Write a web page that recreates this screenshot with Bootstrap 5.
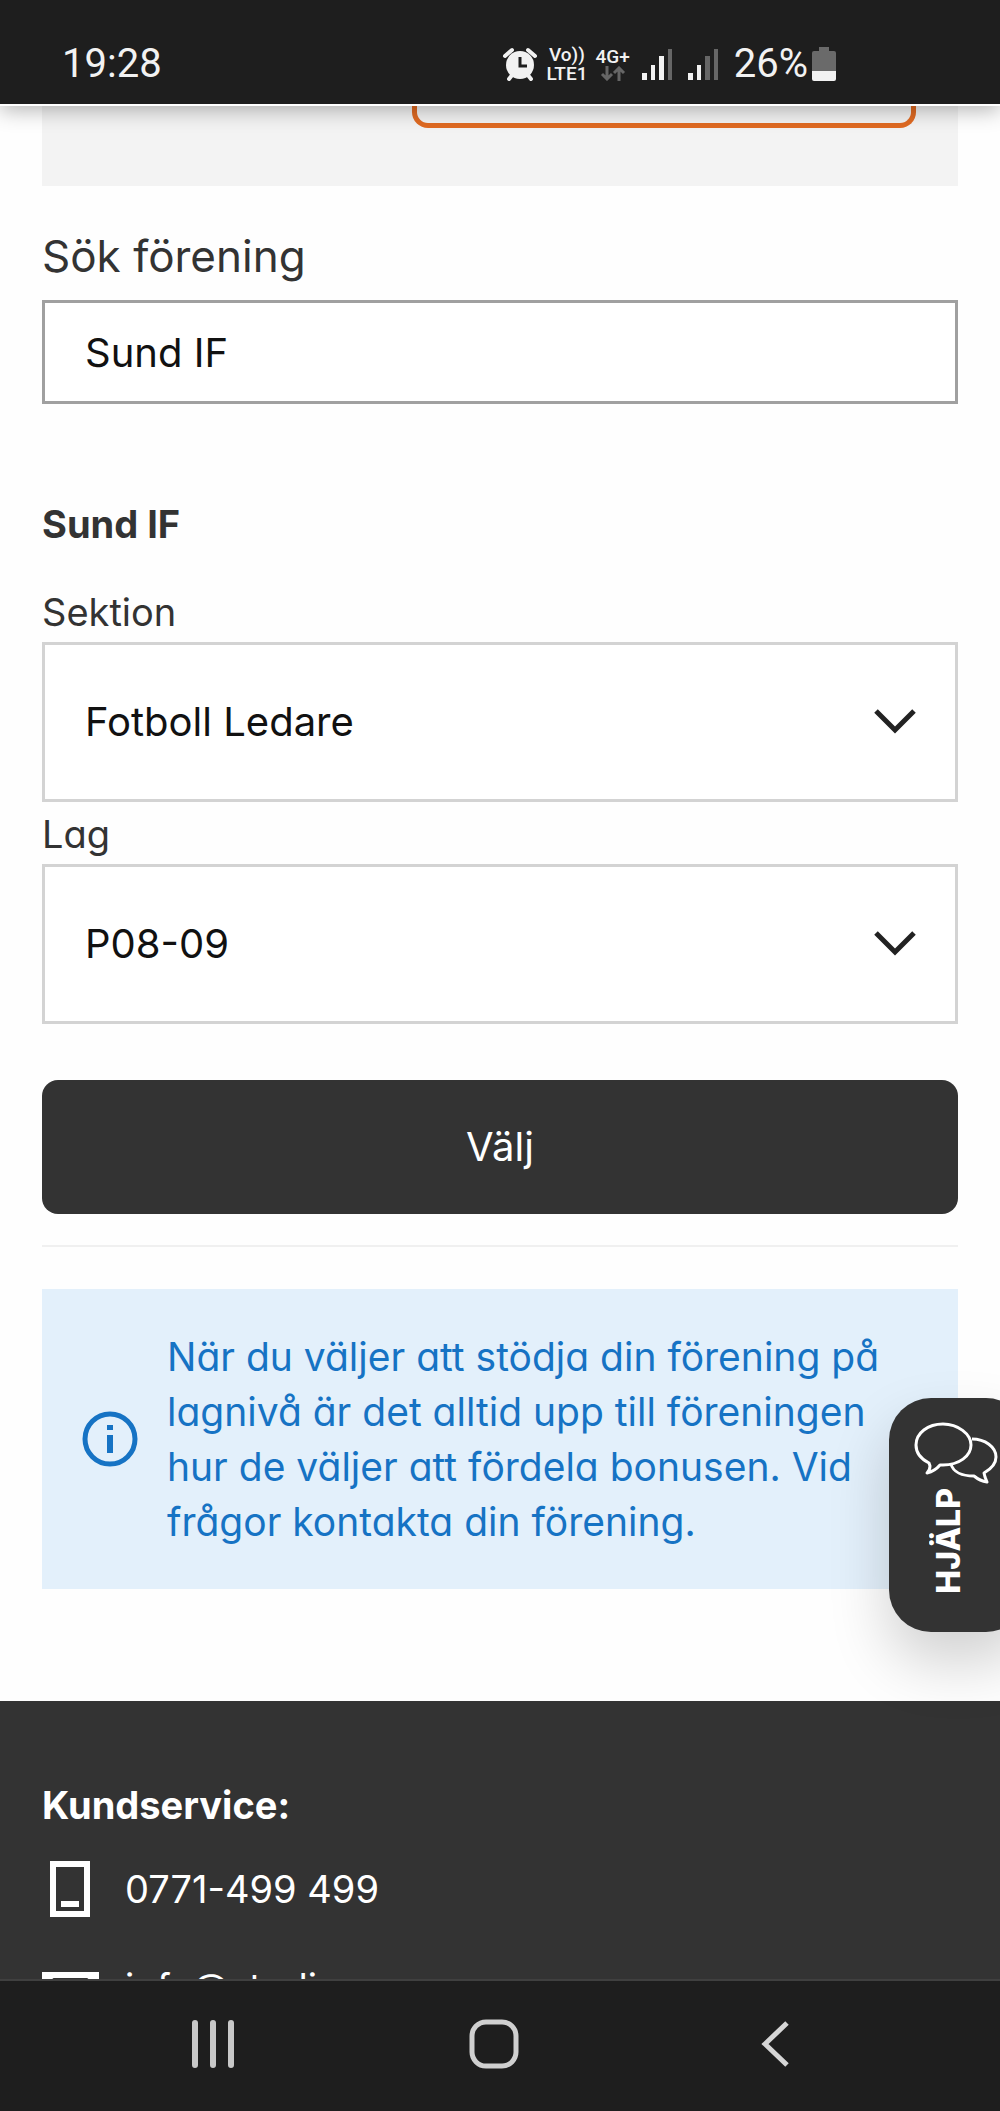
<!DOCTYPE html>
<html lang="sv">
<head>
<meta charset="utf-8">
<meta name="viewport" content="width=device-width, initial-scale=1">
<title>Välj förening</title>
<link href="https://cdn.jsdelivr.net/npm/bootstrap@5.3.0/dist/css/bootstrap.min.css" rel="stylesheet">
<style>
  body { font-family: Inter, "Liberation Sans", sans-serif; font-size: 38px; font-feature-settings: "cv11"; color: #333; background: #fefefe; }
  .statusbar { height: 106px; padding: 24px 160px 0 62px; background: #1e1e1e; border-bottom: 2px solid #fff; box-shadow: 0 4px 20px rgba(0,0,0,.3); font-family: Roboto, sans-serif; font-size: 40px; line-height: 44px; color: #f2f2f2; z-index: 3; }
  .net-tag { font-size: 19px; line-height: 19px; font-weight: 500; text-align: center; }
  .page-pad { padding: 0 42px; }
  .promo { height: 80px; padding-right: 42px; background: #f3f3f3; }
  .promo-frame { width: 504px; height: 22px; border: 5px solid #e06a22; border-top: 0; border-radius: 0 0 16px 16px; }
  .lbl-search { margin-top: 46px; margin-bottom: 20px; font-size: 44px; line-height: 48px; }
  .lbl { font-size: 38px; line-height: 48px; margin-bottom: 6px; }
  .field-search, .field-pick { border-radius: 0; padding: 0 40px; font-size: 40px; color: #111; background-color: #fff; }
  .field-search { height: 104px; border: 3px solid #a0a0a0; }
  .field-pick { height: 160px; border: 3px solid #d3d3d3; background-position: right 38px center; background-size: 44px 28px;
    --bs-form-select-bg-img: url("data:image/svg+xml,%3Csvg xmlns='http://www.w3.org/2000/svg' viewBox='0 0 44 28'%3E%3Cpath d='M3 3 22 22 41 3' fill='none' stroke='%23222' stroke-width='5'/%3E%3C/svg%3E"); }
  .club { margin: 96px 0 40px; font-size: 38px; line-height: 48px; font-weight: 700; }
  .btn-pick { height: 134px; margin-top: 56px; border-radius: 16px; font-size: 40px; --bs-btn-bg: #333; --bs-btn-color: #fff; --bs-btn-hover-bg: #222; --bs-btn-hover-color: #fff; }
  .rule { margin: 31px 0 42px; border-top: 2px solid #f0f0f0; opacity: 1; }
  .note { padding: 40px; gap: 29px; margin-bottom: 112px; background: #e3f0fb; color: #1673c4; font-size: 39px; line-height: 55px; }
  .help { right: -28px; top: 1292px; width: 139px; height: 234px; padding: 24px 28px 0 22px; border: 0; border-radius: 42px; background: #333; color: #fff; box-shadow: 0 30px 60px rgba(0,0,0,.18); z-index: 2; }
  .help-word { writing-mode: vertical-rl; transform: rotate(180deg); margin: 4px 14px 0 0; font-size: 32px; line-height: 40px; font-weight: 800; }
  .foot { padding: 80px 42px 0; background: #333; color: #fff; }
  .foot-title { font-size: 38px; line-height: 48px; font-weight: 700; margin-bottom: 20px; }
  .foot-link { gap: 26px; color: #fff; text-decoration: none; }
  .foot-phone { height: 80px; margin-bottom: 43px; }
  .foot-mail { line-height: 30px; }
  .navkeys { height: 132px; padding: 0 86px 10px 74px; background: #1e1e1e; border-top: 2px solid #404040; z-index: 3; }
  .navkeys button { background: none; border: 0; }
</style>
</head>
<body class="vh-100 d-flex flex-column overflow-hidden">
<header class="statusbar position-relative flex-shrink-0 d-flex justify-content-between align-items-center">
  <time>19:28</time>
  <div class="d-flex align-items-center">
    <svg class="me-2" width="36" height="34" viewBox="0 0 36 34" role="img" aria-label="Alarm"><circle cx="18" cy="18" r="14" fill="#f2f2f2"/><path d="M3 9 10 3M33 9 26 3M7 32l4-5M29 32l-4-5" stroke="#f2f2f2" stroke-width="4" stroke-linecap="round"/><path d="M18 10v9h7" fill="none" stroke="#1e1e1e" stroke-width="3"/></svg>
    <div class="net-tag me-2">Vo))<br>LTE1</div>
    <div class="net-tag d-flex flex-column align-items-center me-2">4G+
      <svg width="26" height="15" viewBox="0 0 26 15"><path d="M7 0v12M2 8l5 5 5-5M19 15V3M14 7l5-5 5 5" fill="none" stroke="#666" stroke-width="3"/></svg>
    </div>
    <svg class="ms-1 me-3" width="30" height="32" viewBox="0 0 30 32"><path d="M0 25h5v7H0zM9 17h4v15H9zM17 8h5v24h-5z" fill="#f2f2f2"/><path d="M26 1h4v31h-4z" fill="#666"/></svg>
    <svg class="me-3" width="30" height="32" viewBox="0 0 30 32"><path d="M0 25h5v7H0zM9 17h4v15H9z" fill="#f2f2f2"/><path d="M17 8h5v24h-5zM26 1h4v31h-4z" fill="#666"/></svg>
    <span class="me-1">26%</span>
    <svg class="me-1" width="24" height="34" viewBox="0 0 24 34"><path d="M7 0h10v4h5q2 0 2 2v19H0V6q0-2 2-2h5z" fill="#6a6a6a"/><path d="M0 24h24v8q0 2-2 2H2q-2 0-2-2z" fill="#f2f2f2"/></svg>
  </div>
</header>

<div class="flex-grow-1 overflow-hidden position-relative">
  <main class="page-pad">
    <div class="promo d-flex justify-content-end"><div class="promo-frame"></div></div>
    <form>
      <label class="lbl-search d-block" for="search">Sök förening</label>
      <input class="form-control field-search" id="search" type="text" value="Sund IF">
      <h2 class="club">Sund IF</h2>
      <label class="lbl d-block" for="section">Sektion</label>
      <select class="form-select field-pick" id="section"><option>Fotboll Ledare</option></select>
      <label class="lbl d-block pt-2" for="team">Lag</label>
      <select class="form-select field-pick" id="team"><option>P08-09</option></select>
      <button class="btn btn-pick w-100" type="button">Välj</button>
    </form>
    <hr class="rule">
    <div class="note d-flex align-items-center">
      <svg class="flex-shrink-0" width="56" height="56" viewBox="0 0 56 56"><circle cx="28" cy="28" r="25" fill="none" stroke="#1673c4" stroke-width="5"/><path d="M25 14h6v5h-6zM25 24h6v18h-6z" fill="#1673c4"/></svg>
      <div>När du väljer att stödja din förening på lagnivå är det alltid upp till föreningen hur de väljer att fördela bonusen. Vid frågor kontakta din förening.</div>
    </div>
  </main>
  <button class="help position-absolute d-flex flex-column align-items-center" type="button">
    <svg class="flex-shrink-0" width="84" height="62" viewBox="0 0 84 62" fill="none" stroke="#fff" stroke-width="3" stroke-linejoin="round"><path d="M29 2C14 2 2 11 2 23c0 8 5 14 13 18l1 3q0 4-3 7 8-2 13-8h3c16 0 28-9 28-20S44 2 29 2z"/><path d="M58 17c13 0 24 8 24 18 0 7-5 12-12 16l1 4 2 5q-7-1-13-6C48 54 39 50 37 42"/></svg>
    <span class="help-word">HJÄLP</span>
  </button>
  <footer class="foot h-100">
    <h2 class="foot-title">Kundservice:</h2>
    <a class="foot-link foot-phone d-flex align-items-center" href="tel:0771499499">
      <svg width="57" height="58" viewBox="0 0 57 58"><path d="M11 4h34v50H11z" fill="none" stroke="#fff" stroke-width="6"/><path d="M19 41h18v6H19z" fill="#fff"/></svg>
      0771-499 499</a>
    <a class="foot-link foot-mail d-flex align-items-start" href="mailto:info@stadium.se">
      <svg width="57" height="46" viewBox="0 0 57 46"><path d="M3 3h51v40H3zM3 4l25 20L54 4" fill="none" stroke="#fff" stroke-width="6"/></svg>
      info@stadium.se</a>
  </footer>
</div>

<nav class="navkeys flex-shrink-0 d-flex">
  <button class="flex-fill" type="button" aria-label="Senaste"><svg width="44" height="48" viewBox="0 0 44 48"><path d="M4 3v42M22 3v42M40 3v42" stroke="#c8c8c8" stroke-width="6" stroke-linecap="round"/></svg></button>
  <button class="flex-fill" type="button" aria-label="Hem"><svg width="50" height="50" viewBox="0 0 50 50"><rect x="3" y="3" width="44" height="44" rx="14" fill="none" stroke="#d0d0d0" stroke-width="5"/></svg></button>
  <button class="flex-fill" type="button" aria-label="Tillbaka"><svg width="44" height="48" viewBox="0 0 44 48"><path d="M34 3 12 24l22 21" fill="none" stroke="#d6d6d6" stroke-width="5"/></svg></button>
</nav>
<script src="https://cdn.jsdelivr.net/npm/bootstrap@5.3.0/dist/js/bootstrap.bundle.min.js"></script>
</body>
</html>
